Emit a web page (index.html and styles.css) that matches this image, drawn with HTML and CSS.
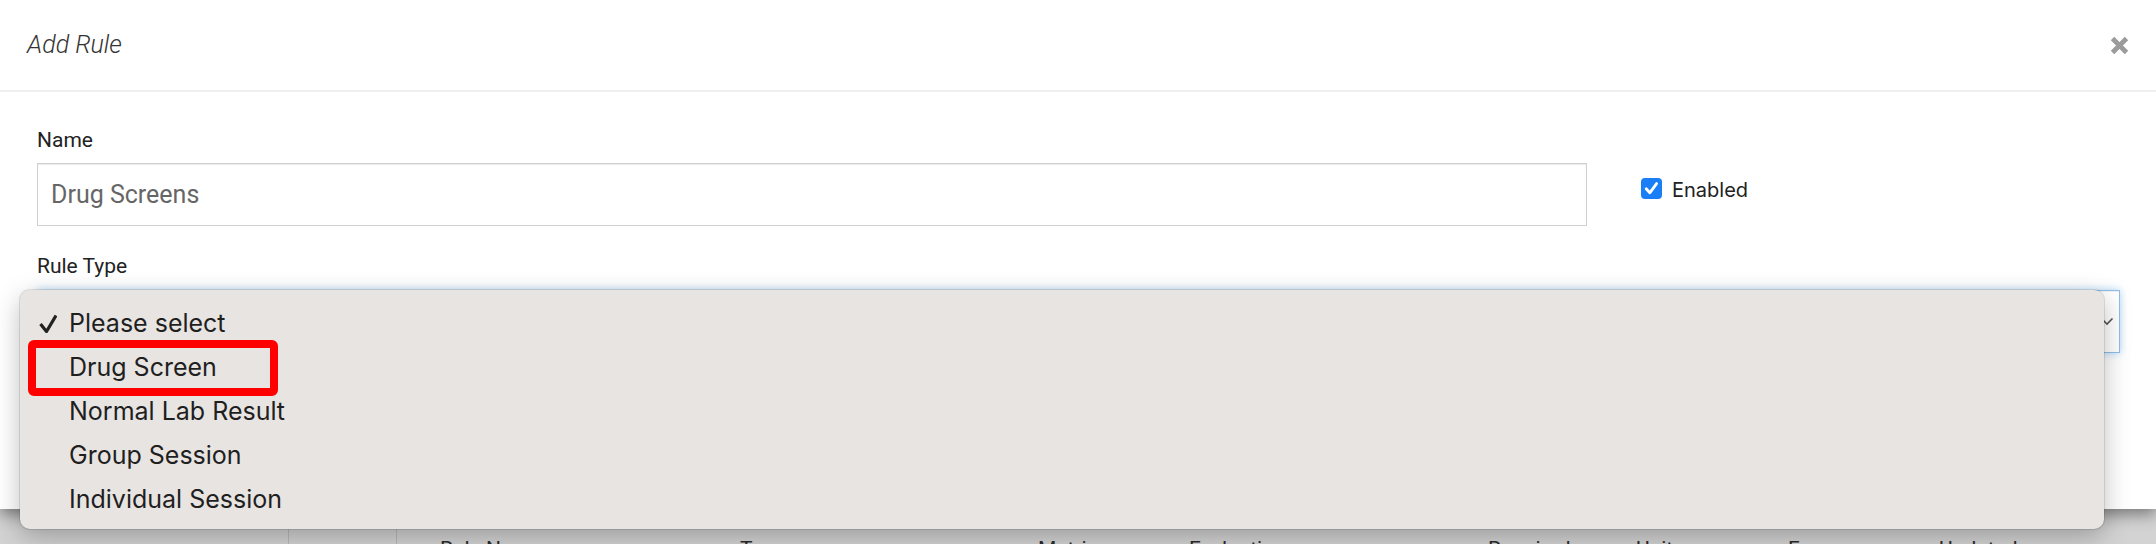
FILE: index.html
```html
<!DOCTYPE html>
<html lang="en">
<head>
<meta charset="utf-8">
<title>Add Rule</title>
<link rel="stylesheet" href="styles.css">
</head>
<body>
<div class="modal">
  <div class="modal-header">
    <h4 class="modal-title">Add Rule</h4>
    <button class="close" aria-label="Close">
      <svg width="19" height="19" viewBox="0 0 19 19"><path d="M2.5 2.5 L16.5 16.5 M16.5 2.5 L2.5 16.5" stroke="#9b9b9b" stroke-width="4.8" fill="none"/></svg>
    </button>
  </div>
  <div class="modal-body">
    <div class="row">
      <div class="field name-field">
        <label class="label">Name</label>
        <div class="input">Drug Screens</div>
      </div>
      <div class="check-field">
        <span class="checkbox"><svg width="21" height="21" viewBox="0 0 21 21"><path d="M5.2 10.8 L8.8 14.8 L15.6 5.6" stroke="#fff" stroke-width="2.8" fill="none" stroke-linecap="round" stroke-linejoin="round"/></svg></span>
        <span class="check-label">Enabled</span>
      </div>
    </div>
    <div class="field type-field">
      <label class="label">Rule Type</label>
      <div class="select-wrap">
        <div class="select">
          <svg class="chevron" width="14" height="9" viewBox="0 0 14 9"><path d="M1.5 1.5 L7 7 L12.5 1.5" stroke="#555" stroke-width="1.6" fill="none"/></svg>
        </div>
        <div class="popup">
          <ul class="menu">
            <li><span class="mark"><svg width="18" height="19" viewBox="0 0 18 19"><path d="M1.5 10 L7.5 17.5 L17 1.5" stroke="#222" stroke-width="3.2" fill="none" stroke-linejoin="round"/></svg></span><span>Please select</span></li>
            <li><span class="mark"></span><span>Drug Screen</span></li>
            <li><span class="mark"></span><span>Normal Lab Result</span></li>
            <li><span class="mark"></span><span>Group Session</span></li>
            <li><span class="mark"></span><span>Individual Session</span></li>
          </ul>
          <div class="annot"></div>
        </div>
      </div>
    </div>
  </div>
</div>
<div class="table-head">
  <div class="cell"></div>
  <div class="cell sep"></div>
  <div class="cell sep th first">Rule Name</div>
  <div class="cell th">Type</div>
  <div class="cell th">Metric</div>
  <div class="cell th">Evaluation</div>
  <div class="cell th">Required</div>
  <div class="cell th">Units</div>
  <div class="cell th">Frequency</div>
  <div class="cell th">Updated</div>
</div>
</body>
</html>
```
FILE: styles.css
```css
html, body {
  margin: 0;
  padding: 0;
}

body {
  width: 2156px;
  height: 544px;
  overflow: hidden;
  background: #d3d3d3;
  font-family: Roboto, "Liberation Sans", sans-serif;
}

.modal {
  position: relative;
  z-index: 2;
  height: 509px;
  background: #fff;
  box-shadow: 0 5px 15px rgba(0, 0, 0, 0.45);
}

.modal-header {
  box-sizing: border-box;
  height: 92px;
  padding: 0 27px;
  display: flex;
  align-items: center;
  justify-content: space-between;
  border-bottom: 2px solid #efefef;
}

.modal-title {
  margin: 0;
  font-family: Roboto, sans-serif;
  font-style: italic;
  font-weight: 300;
  font-size: 25px;
  line-height: 30px;
  color: #333;
}

.close {
  border: 0;
  background: none;
  padding: 0;
  width: 19px;
  height: 19px;
  line-height: 0;
}

.modal-body {
  padding: 36px 36px 0 37px;
}

.row {
  display: flex;
}

.name-field {
  width: 1550px;
  flex: none;
}

.label {
  display: block;
  font-family: Roboto, sans-serif;
  font-size: 21px;
  line-height: 24px;
  color: #222;
  margin-bottom: 11px;
}

.input {
  box-sizing: border-box;
  height: 63px;
  border: 1px solid #d0d0d0;
  box-shadow: inset 0 1px 1px rgba(0, 0, 0, 0.08);
  padding: 0 13px;
  display: flex;
  align-items: center;
  font-family: Roboto, sans-serif;
  font-size: 25px;
  color: #666;
}

.check-field {
  margin-left: 54px;
  padding-top: 50px;
  display: flex;
  align-items: flex-start;
  gap: 10px;
}

.checkbox {
  width: 21px;
  height: 21px;
  border-radius: 4px;
  background: #1a7ff6;
  line-height: 0;
}

.check-label {
  padding-top: 2px;
  font-family: Inter, sans-serif;
  font-size: 20px;
  line-height: 21px;
  color: #222;
}

.type-field {
  margin-top: 28px;
}

.type-field .label {
  margin-bottom: 12px;
}

.select-wrap {
  position: relative;
}

.select {
  box-sizing: border-box;
  height: 63px;
  background: #fff;
  border: 1px solid #8fbde9;
  box-shadow: inset 0 1px 1px rgba(0, 0, 0, 0.06), 0 0 8px rgba(102, 175, 233, 0.55);
  display: flex;
  align-items: center;
  justify-content: flex-end;
  padding-right: 5px;
}

.popup {
  position: absolute;
  top: 0;
  left: -17px;
  right: 16px;
  height: 239px;
  box-sizing: border-box;
  padding-top: 11px;
  background: #e8e4e1;
  border-radius: 10px;
  box-shadow: 0 0 0 1px rgba(0, 0, 0, 0.1), 0 8px 26px rgba(0, 0, 0, 0.26);
  z-index: 3;
}

.menu {
  list-style: none;
  margin: 0;
  padding: 0;
}

.menu li {
  display: grid;
  grid-template-columns: 49px auto;
  align-items: center;
  height: 44px;
  font-family: Inter, sans-serif;
  font-size: 25px;
  line-height: 44px;
  color: #1f1f1f;
}

.mark {
  padding-left: 19px;
  line-height: 0;
}

.annot {
  position: absolute;
  left: 8px;
  top: 50px;
  width: 250px;
  height: 56px;
  box-sizing: border-box;
  border: 8px solid #fe0000;
  border-radius: 6px;
}

.table-head {
  display: grid;
  grid-template-columns: 288px 108px 300px 298px 151px 299px 148px 152px 151px 1fr;
  height: 35px;
}

.cell {
  box-sizing: border-box;
}

.sep {
  border-left: 1px solid #b9b9b9;
}

.th {
  padding: 28px 0 0 44px;
  font-family: Roboto, sans-serif;
  font-size: 21px;
  line-height: 24px;
  color: #2a2a2a;
  white-space: nowrap;
}

.th.first {
  padding-left: 43px;
}
```
